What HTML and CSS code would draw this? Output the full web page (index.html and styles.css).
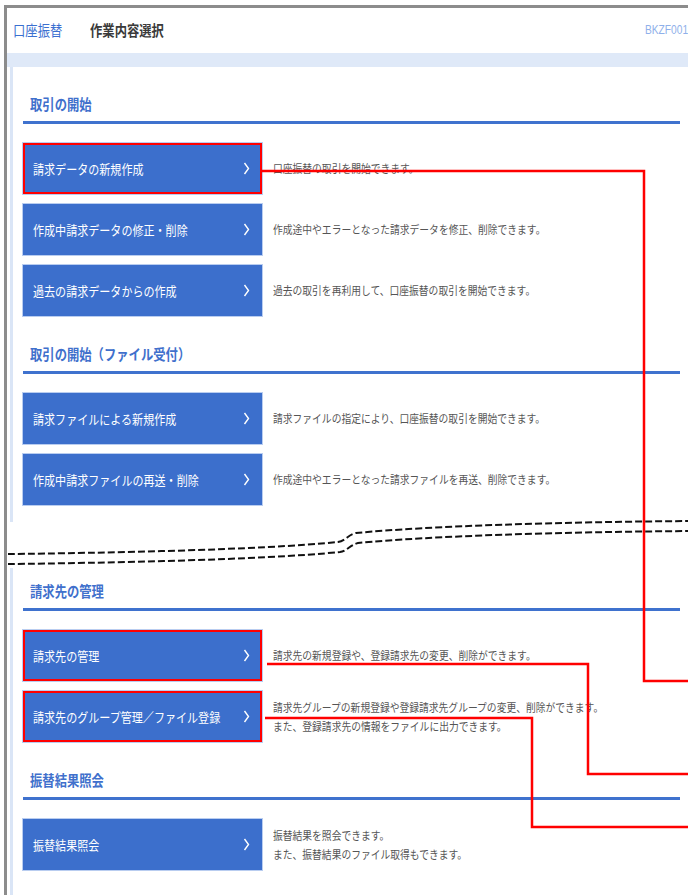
FILE: index.html
```html
<!DOCTYPE html>
<html lang="ja">

<head>
  <meta charset="UTF-8">
  <meta name="viewport" content="width=device-width, initial-scale=1.0">
  <title>口座振替 作業内容選択</title>

  <link rel="stylesheet" href="styles.css">
</head>

<body>
  <div class="frame">
    <div class="title-bar">
      <span class="sq service">口座振替</span>
      <span class="sq screen-name">作業内容選択</span>
      <span class="sq screen-id">BKZF001</span>
    </div>
    <div class="band"></div>

    <!-- 取引の開始 -->
    <div class="panel panel-top">
      <div class="section">
        <h2 class="sec-title"><span class="sq">取引の開始</span></h2>
        <div class="menu">
          <div class="row">
            <a class="btn marked" href="#"><span class="sq">請求データの新規作成</span>
              <svg class="chev" width="7" height="13" viewBox="0 0 7 13"><polyline points="1.5,1 5.5,6.5 1.5,12" /></svg></a>
            <div class="desc"><span class="sq">口座振替の取引を開始できます。</span></div>
          </div>
          <div class="row">
            <a class="btn" href="#"><span class="sq">作成中請求データの修正・削除</span>
              <svg class="chev" width="7" height="13" viewBox="0 0 7 13"><polyline points="1.5,1 5.5,6.5 1.5,12" /></svg></a>
            <div class="desc"><span class="sq">作成途中やエラーとなった請求データを修正、削除できます。</span></div>
          </div>
          <div class="row">
            <a class="btn" href="#"><span class="sq">過去の請求データからの作成</span>
              <svg class="chev" width="7" height="13" viewBox="0 0 7 13"><polyline points="1.5,1 5.5,6.5 1.5,12" /></svg></a>
            <div class="desc"><span class="sq">過去の取引を再利用して、口座振替の取引を開始できます。</span></div>
          </div>
        </div>
      </div>

      <div class="section">
        <h2 class="sec-title"><span class="sq">取引の開始（ファイル受付）</span></h2>
        <div class="menu">
          <div class="row">
            <a class="btn" href="#"><span class="sq">請求ファイルによる新規作成</span>
              <svg class="chev" width="7" height="13" viewBox="0 0 7 13"><polyline points="1.5,1 5.5,6.5 1.5,12" /></svg></a>
            <div class="desc"><span class="sq">請求ファイルの指定により、口座振替の取引を開始できます。</span></div>
          </div>
          <div class="row">
            <a class="btn" href="#"><span class="sq">作成中請求ファイルの再送・削除</span>
              <svg class="chev" width="7" height="13" viewBox="0 0 7 13"><polyline points="1.5,1 5.5,6.5 1.5,12" /></svg></a>
            <div class="desc"><span class="sq">作成途中やエラーとなった請求ファイルを再送、削除できます。</span></div>
          </div>
        </div>
      </div>
    </div>

    <div class="break"></div>

    <!-- 請求先の管理 -->
    <div class="panel panel-bottom">
      <div class="section">
        <h2 class="sec-title"><span class="sq">請求先の管理</span></h2>
        <div class="menu">
          <div class="row">
            <a class="btn marked" href="#"><span class="sq">請求先の管理</span>
              <svg class="chev" width="7" height="13" viewBox="0 0 7 13"><polyline points="1.5,1 5.5,6.5 1.5,12" /></svg></a>
            <div class="desc"><span class="sq">請求先の新規登録や、登録請求先の変更、削除ができます。</span></div>
          </div>
          <div class="row">
            <a class="btn marked" href="#"><span class="sq">請求先のグループ管理／ファイル登録</span>
              <svg class="chev" width="7" height="13" viewBox="0 0 7 13"><polyline points="1.5,1 5.5,6.5 1.5,12" /></svg></a>
            <div class="desc">
              <span class="sq">請求先グループの新規登録や登録請求先グループの変更、削除ができます。</span>
              <span class="sq">また、登録請求先の情報をファイルに出力できます。</span>
            </div>
          </div>
        </div>
      </div>

      <div class="section">
        <h2 class="sec-title"><span class="sq">振替結果照会</span></h2>
        <div class="menu">
          <div class="row">
            <a class="btn" href="#"><span class="sq">振替結果照会</span>
              <svg class="chev" width="7" height="13" viewBox="0 0 7 13"><polyline points="1.5,1 5.5,6.5 1.5,12" /></svg></a>
            <div class="desc">
              <span class="sq">振替結果を照会できます。</span>
              <span class="sq">また、振替結果のファイル取得もできます。</span>
            </div>
          </div>
        </div>
      </div>
    </div>
  </div>

  <!-- 注記（省略線と赤い引き出し線） -->
  <svg class="marks" width="688" height="895" viewBox="0 0 688 895">
    <path class="cut" d="M8,554 C100,553 260,550 338,542 C345,541 348,535 356,533 C430,526 560,522 690,521" />
    <path class="cut" d="M8,564 C100,563 260,560 340,552 C347,551 350,545 358,543 C430,536 560,532 690,531" />
    <polyline class="lead" points="262,171 644,171 644,681 690,681" />
    <polyline class="lead" points="267,664 588,664 588,774 690,774" />
    <polyline class="lead" points="265,718 532,718 532,827 690,827" />
  </svg>
</body>

</html>
```

FILE: styles.css
```css
html,
body {
  margin: 0;
  overflow: hidden;
  background: #fff;
}

body {
  font-family: "Noto Sans CJK JP", "Noto Sans", sans-serif;
  color: #555;
}

/* 横に詰まった文字 */
.sq {
  display: inline-block;
  transform: scaleX(.85);
  transform-origin: 0 50%;
  white-space: nowrap;
}

.frame {
  width: 700px;
  margin: 5px 0 0 4px;
  border-top: 3px solid #8c8c8c;
  border-left: 3px solid #8c8c8c;
}

.title-bar {
  display: flex;
  align-items: center;
  height: 45px;
  padding: 0 11px 2px 6px;
  box-sizing: border-box;
  font-size: 14.5px;
  line-height: 20px;
}

.title-bar .service {
  color: #3b6fd0;
  margin-right: 19px;
}

.title-bar .screen-name {
  color: #3a3a3a;
  font-weight: bold;
}

.title-bar .screen-id {
  margin-left: auto;
  color: #8fb0ea;
  font-family: "Liberation Sans", sans-serif;
  font-size: 12px;
}

.band {
  height: 14px;
  background: #dfe9f8;
}

.panel {
  margin-left: 3px;
  border-left: 3px solid #dae5f6;
  padding-left: 10px;
}

.panel-top {
  padding-top: 27px;
  padding-bottom: 17px;
}

.panel-bottom {
  padding-top: 13px;
  min-height: 314px;
}

.break {
  height: 46px;
}

.section {
  width: 657px;
}

.section + .section {
  margin-top: 28px;
}

.sec-title {
  margin: 0 0 19px;
  padding: 0 0 7px 7px;
  font-size: 14.5px;
  line-height: 20px;
  font-weight: bold;
  color: #4070cc;
  border-bottom: 3px solid #3f72ce;
}

.menu {
  display: flex;
  flex-direction: column;
  gap: 10px;
}

.row {
  display: flex;
  align-items: center;
}

.btn {
  flex-shrink: 0;
  display: flex;
  align-items: center;
  width: 239px;
  height: 51px;
  box-sizing: border-box;
  padding: 0 12px 0 10px;
  background: #3c6fcc;
  box-shadow: 0 0 0 1px #b9cdf0;
  color: #fff;
  font-size: 13px;
  text-decoration: none;
}

.btn .sq {
  flex: 1;
  min-width: 0;
}

.btn.marked {
  outline: 2px solid #f00;
  outline-offset: -2px;
}

.chev {
  flex-shrink: 0;
}

.chev polyline {
  fill: none;
  stroke: #fff;
  stroke-width: 1.4;
}

.desc {
  margin-left: 11px;
  font-size: 11.5px;
  line-height: 19px;
  color: #555;
}

.desc .sq {
  display: block;
}

.marks {
  position: absolute;
  top: 0;
  left: 0;
  pointer-events: none;
}

.marks .cut {
  fill: none;
  stroke: #111;
  stroke-width: 2;
  stroke-dasharray: 7 3;
}

.marks .lead {
  fill: none;
  stroke: #f00;
  stroke-width: 2.5;
}
```
